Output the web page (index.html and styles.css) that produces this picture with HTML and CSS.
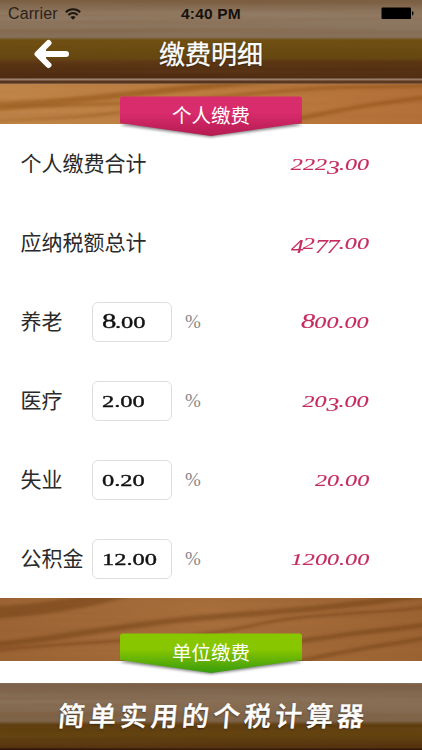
FILE: index.html
```html
<!DOCTYPE html>
<html lang="zh-CN">
<head>
    <meta charset="UTF-8">
    <meta name="viewport" content="width=device-width, initial-scale=1.0">
    <title>缴费明细</title>
    <link rel="stylesheet" href="styles.css">
</head>
<body>
    <svg class="defs" width="0" height="0">
        <defs>
            <filter id="grain" x="0" y="0" width="100%" height="100%">
                <feTurbulence type="fractalNoise" baseFrequency="0.003 0.14" numOctaves="2" seed="8"/>
                <feColorMatrix values="0 0 0 0 0.2  0 0 0 0 0.08  0 0 0 0 0.02  1.4 0 0 0 -0.6"/>
            </filter>
            <filter id="soft" x="-20%" y="-50%" width="140%" height="200%"><feGaussianBlur stdDeviation="1.8"/></filter>
            <linearGradient id="pink" x1="0" y1="0" x2="0" y2="1">
                <stop offset="0.4" stop-color="#d92c6d"/>
                <stop offset="1" stop-color="#b51a50"/>
            </linearGradient>
            <linearGradient id="green" x1="0" y1="0" x2="0" y2="1">
                <stop offset="0.4" stop-color="#88c600"/>
                <stop offset="1" stop-color="#379b0d"/>
            </linearGradient>
        </defs>
    </svg>

    <header class="header">
        <svg class="grain faint" width="422" height="84"><rect width="422" height="84" filter="url(#grain)"/></svg>
        <div class="status-bar">
            <div class="carrier">
                <span>Carrier</span>
                <svg width="16" height="12" viewBox="0 0 16 12" fill="none" stroke="#1d1712" stroke-width="2">
                    <path d="M0.8 4.2a10.2 10.2 0 0 1 14.4 0M3.4 7a6.5 6.5 0 0 1 9.2 0"/>
                    <path d="M8 11.8L5.4 9.2a3.7 3.7 0 0 1 5.2 0z" fill="#1d1712" stroke="none"/>
                </svg>
            </div>
            <span class="time">4:40 PM</span>
            <svg class="battery" width="33" height="13" viewBox="0 0 33 13">
                <rect x="0.5" y="0.5" width="29.5" height="11.5" rx="1" fill="#000"/>
                <path d="M31 4c2 .8 2 3.8 0 4.6z" fill="#000"/>
            </svg>
        </div>
        <div class="nav-bar">
            <svg class="back" width="38" height="30" viewBox="0 0 38 30" fill="none" stroke="#fff" stroke-width="6" stroke-linecap="round" stroke-linejoin="round">
                <path d="M16.500 4L5.500 15l11 11"/>
                <path d="M7 15h27"/>
                <path d="M14 9l-7 6l7 6z" fill="#fff" stroke="none"/>
            </svg>
            <h1 class="title">缴费明细</h1>
        </div>
    </header>

    <main>
        <section class="wood wood-top">
            <svg class="grain" width="422" height="40">
                <g filter="url(#soft)" fill="none" stroke="#7d3f10" stroke-opacity="0.4">
                    <path d="M-9 21C60 19 120 11 200 3S270 -4 290 -6" stroke-width="6"/>
                    <path d="M-9 26C80 18 130 22 240 11S350 5 431 1" stroke-width="3"/>
                    <path d="M260 44C330 26 380 19 431 13" stroke-width="4"/>
                    <path d="M-9 37C60 35 90 33 150 24" stroke-width="2"/>
                </g>
                <rect width="422" height="40" filter="url(#grain)" opacity="0.2"/>
            </svg>
            <div class="ribbon">
                <svg class="ribbon-shape" width="190" height="48" viewBox="0 0 190 48">
                    <path d="M4 31L95 43L186 31L180 29H10z" fill="#000" opacity="0.5" filter="url(#soft)"/>
                    <path d="M4 29V5q0-2.500 2.500-2.500h177q2.500 0 2.500 2.500V29L95 42z" fill="url(#pink)"/>
                </svg>
                <h2 class="ribbon-text">个人缴费</h2>
            </div>
        </section>

        <ul class="list">
            <li class="row">
                <span class="label">个人缴费合计</span>
                <span class="amount">222<span class="low">3</span>.00</span>
            </li>
            <li class="row">
                <span class="label">应纳税额总计</span>
                <span class="amount"><span class="low">4</span>2<span class="low">77</span>.00</span>
            </li>
            <li class="row">
                <span class="label short">养老</span>
                <span class="field"><span class="num"><span class="tall">8</span>.00</span></span>
                <span class="percent">%</span>
                <span class="amount"><span class="tall">8</span>00.00</span>
            </li>
            <li class="row">
                <span class="label short">医疗</span>
                <span class="field"><span class="num">2.00</span></span>
                <span class="percent">%</span>
                <span class="amount">20<span class="low">3</span>.00</span>
            </li>
            <li class="row">
                <span class="label short">失业</span>
                <span class="field"><span class="num">0.20</span></span>
                <span class="percent">%</span>
                <span class="amount">20.00</span>
            </li>
            <li class="row">
                <span class="label short">公积金</span>
                <span class="field"><span class="num">12.00</span></span>
                <span class="percent">%</span>
                <span class="amount">1200.00</span>
            </li>
        </ul>

        <section class="wood wood-bottom">
            <svg class="grain" width="422" height="63">
                <g filter="url(#soft)" fill="none" stroke="#5c2a0c" stroke-opacity="0.35">
                    <path d="M-9 15C40 12 90 4 130 -8" stroke-width="12"/>
                    <path d="M-9 47C70 40 110 28 200 20S310 13 431 -4" stroke-width="6"/>
                    <path d="M-9 53C80 42 180 44 250 28S370 18 431 8" stroke-width="3"/>
                    <path d="M240 52C340 36 380 33 431 26" stroke-width="5"/>
                    <path d="M280 68C350 50 380 49 431 39" stroke-width="4"/>
                </g>
                <rect width="422" height="63" filter="url(#grain)" opacity="0.2"/>
            </svg>
            <div class="ribbon">
                <svg class="ribbon-shape" width="190" height="48" viewBox="0 0 190 48">
                    <path d="M4 31L95 43L186 31L180 29H10z" fill="#000" opacity="0.5" filter="url(#soft)"/>
                    <path d="M4 29V5q0-2.500 2.500-2.500h177q2.500 0 2.500 2.500V29L95 42z" fill="url(#green)"/>
                </svg>
                <h2 class="ribbon-text">单位缴费</h2>
            </div>
        </section>
    </main>

    <footer class="footer">
        <svg class="grain faint" width="422" height="67"><rect width="422" height="67" filter="url(#grain)"/></svg>
        <p class="slogan">简单实用的个税计算器</p>
    </footer>
</body>
</html>
```

FILE: styles.css
```css
:root {
    --pink: #c52b60;
    --text-color: #2a2a2a;
    --font-family: 'Liberation Sans', 'Noto Sans CJK SC', sans-serif;
    --number-font: 'Liberation Serif', serif;
}

* {
    margin: 0;
    padding: 0;
    box-sizing: border-box;
}

body {
    width: 422px;
    height: 750px;
    overflow: hidden;
    display: flex;
    flex-direction: column;
    font-family: var(--font-family);
    color: var(--text-color);
    background: #fff;
}

.defs {
    position: absolute;
}

.grain {
    position: absolute;
    top: 0;
    left: 0;
}

.faint {
    opacity: 0.5;
}

.header {
    position: relative;
    height: 84px;
    background: linear-gradient(#7a6045 0, #927b64 14px, #86705a 37px, #6f5011 40px, #654710 58px, #5a3512 62px, #4e2b12 78px, #a38978 79px, #967b69 80px, #57351f 81px, #57351f 83px, #a08064 84px);
}

.status-bar {
    position: relative;
    height: 27px;
    padding: 0 8px;
    display: flex;
    align-items: center;
    justify-content: space-between;
    font-size: 16px;
}

.carrier {
    width: 150px;
    display: flex;
    align-items: center;
    gap: 7px;
    letter-spacing: 0.1px;
    color: #2b221b;
}

.time {
    font-weight: bold;
    font-size: 15.5px;
    letter-spacing: 0.2px;
    color: #16110d;
}

.battery {
    margin-left: 117px;
}

.nav-bar {
    position: relative;
    height: 56px;
    display: flex;
    align-items: center;
    justify-content: center;
}

.back {
    position: absolute;
    left: 32px;
    top: 12px;
}

.title {
    font-size: 26px;
    font-weight: 400;
    line-height: 36px;
    color: #fff;
    text-shadow: 0 1px 2px rgba(0, 0, 0, 0.5);
    -webkit-text-stroke: 0.3px #fff;
}

.wood {
    position: relative;
    display: flex;
    justify-content: center;
}

.wood-top {
    height: 40px;
    padding-top: 10px;
    background: linear-gradient(90deg, #c08548, #bd7d40 50%, #b37038);
}

.wood-bottom {
    height: 63px;
    padding-top: 33px;
    background: linear-gradient(90deg, #9c6434, #a86f3c 50%, #9c6332);
}

.ribbon {
    position: relative;
    z-index: 1;
    width: 190px;
    height: 48px;
    flex: none;
}

.ribbon-shape {
    display: block;
}

.ribbon-text {
    position: absolute;
    top: 7px;
    left: 0;
    width: 100%;
    text-align: center;
    font-size: 19.5px;
    font-weight: 400;
    line-height: 30px;
    color: #fff;
}

.list {
    height: 474px;
    list-style: none;
    background: #fff;
}

.row {
    height: 79px;
    padding: 0 53px 0 20.5px;
    display: flex;
    align-items: center;
}

.label {
    font-size: 21px;
    line-height: 30px;
}

.short {
    width: 71.5px;
}

.field {
    width: 80px;
    height: 40px;
    padding-left: 9px;
    display: flex;
    align-items: center;
    border: 1px solid #ddd;
    border-radius: 6px;
}

/* wide old-style figures */
.num,
.amount {
    position: relative;
    top: 1px;
    display: inline-block;
    font-family: var(--number-font);
    font-size: 17px;
    line-height: 24px;
    white-space: nowrap;
}

.num {
    color: #111;
    transform: scaleX(1.44);
    transform-origin: left;
    -webkit-text-stroke: 0.35px #111;
}

.amount {
    margin-left: auto;
    font-style: italic;
    color: var(--pink);
    transform: scaleX(1.42);
    transform-origin: right;
    -webkit-text-stroke: 0.15px var(--pink);
}

.low {
    position: relative;
    top: 4px;
    font-size: 18px;
    line-height: 1;
    letter-spacing: -0.6px;
}

.tall {
    font-size: 20px;
    line-height: 1;
    letter-spacing: -0.6px;
}

.num .tall {
    letter-spacing: -1px;
}

.percent {
    margin-left: 13px;
    font-family: var(--number-font);
    font-size: 19px;
    color: #888;
}

.footer {
    position: relative;
    height: 67px;
    margin-top: 22px;
    display: flex;
    justify-content: center;
    background: linear-gradient(#8a735e 0, #7b624c 2px, #897159 18px, #7d6348 38px, #5d3c0d 42px, #63430f 52px, #52300e 65px, #2e1508 66px);
}

.slogan {
    position: relative;
    left: 2px;
    padding-top: 14px;
    font-size: 27px;
    font-weight: 500;
    line-height: 40px;
    letter-spacing: 4px;
    color: #fff;
    text-shadow: 0 1px 2px rgba(0, 0, 0, 0.5);
    -webkit-text-stroke: 0.4px #fff;
    transform: skewX(-5deg);
}
```
